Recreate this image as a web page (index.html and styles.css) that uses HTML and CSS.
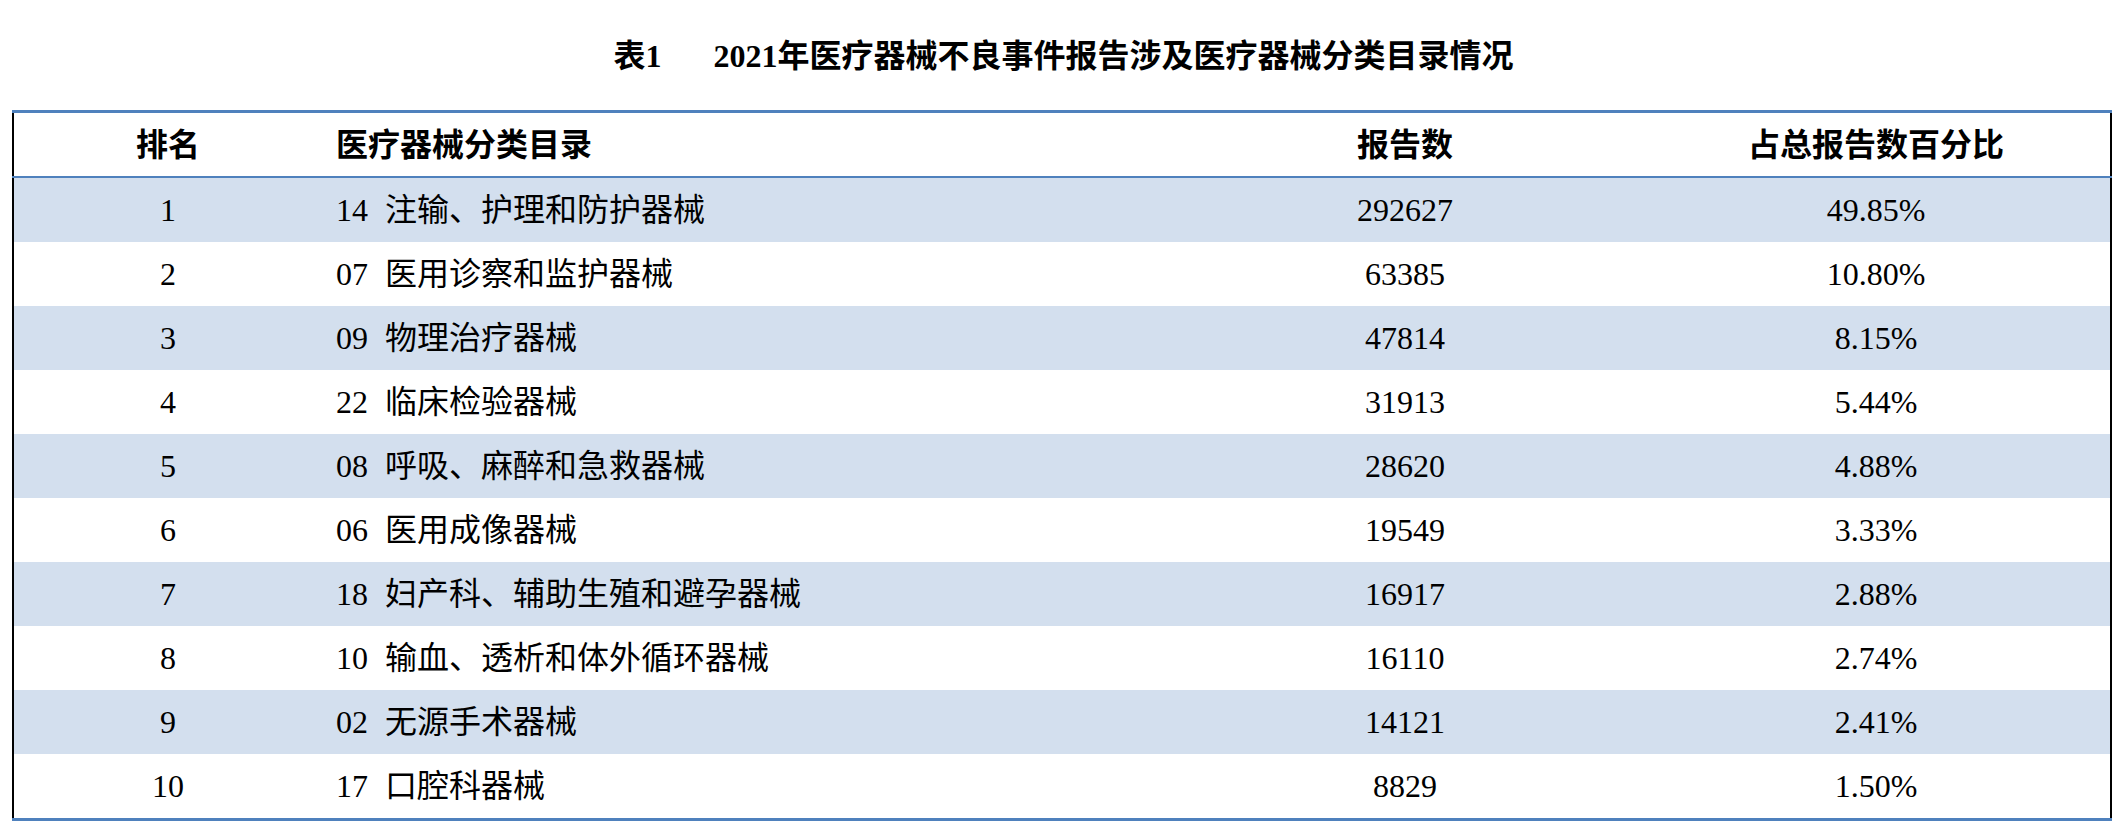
FILE: index.html
```html
<!DOCTYPE html>
<html lang="zh-CN">
<head>
<meta charset="utf-8">
<title>表1 2021年医疗器械不良事件报告涉及医疗器械分类目录情况</title>
<link rel="stylesheet" href="styles.css">
</head>
<body>
<h1 class="title"><span class="title-no">表1</span><span>2021年医疗器械不良事件报告涉及医疗器械分类目录情况</span></h1>
<div class="table">
  <div class="row head">
    <div class="c c-rank">排名</div>
    <div class="c c-cat">医疗器械分类目录</div>
    <div class="c c-num">报告数</div>
    <div class="c c-pct">占总报告数百分比</div>
  </div>
  <div class="rule"></div>
  <div class="row shade">
    <div class="c c-rank">1</div>
    <div class="c c-cat">14 注输、护理和防护器械</div>
    <div class="c c-num">292627</div>
    <div class="c c-pct">49.85%</div>
  </div>
  <div class="row">
    <div class="c c-rank">2</div>
    <div class="c c-cat">07 医用诊察和监护器械</div>
    <div class="c c-num">63385</div>
    <div class="c c-pct">10.80%</div>
  </div>
  <div class="row shade">
    <div class="c c-rank">3</div>
    <div class="c c-cat">09 物理治疗器械</div>
    <div class="c c-num">47814</div>
    <div class="c c-pct">8.15%</div>
  </div>
  <div class="row">
    <div class="c c-rank">4</div>
    <div class="c c-cat">22 临床检验器械</div>
    <div class="c c-num">31913</div>
    <div class="c c-pct">5.44%</div>
  </div>
  <div class="row shade">
    <div class="c c-rank">5</div>
    <div class="c c-cat">08 呼吸、麻醉和急救器械</div>
    <div class="c c-num">28620</div>
    <div class="c c-pct">4.88%</div>
  </div>
  <div class="row">
    <div class="c c-rank">6</div>
    <div class="c c-cat">06 医用成像器械</div>
    <div class="c c-num">19549</div>
    <div class="c c-pct">3.33%</div>
  </div>
  <div class="row shade">
    <div class="c c-rank">7</div>
    <div class="c c-cat">18 妇产科、辅助生殖和避孕器械</div>
    <div class="c c-num">16917</div>
    <div class="c c-pct">2.88%</div>
  </div>
  <div class="row">
    <div class="c c-rank">8</div>
    <div class="c c-cat">10 输血、透析和体外循环器械</div>
    <div class="c c-num">16110</div>
    <div class="c c-pct">2.74%</div>
  </div>
  <div class="row shade">
    <div class="c c-rank">9</div>
    <div class="c c-cat">02 无源手术器械</div>
    <div class="c c-num">14121</div>
    <div class="c c-pct">2.41%</div>
  </div>
  <div class="row">
    <div class="c c-rank">10</div>
    <div class="c c-cat">17 口腔科器械</div>
    <div class="c c-num">8829</div>
    <div class="c c-pct">1.50%</div>
  </div>
</div>
</body>
</html>
```
FILE: styles.css
```css
html, body {
  margin: 0;
  padding: 0;
  background: #ffffff;
}

body {
  font-family: "Liberation Serif", "Noto Sans CJK SC", serif;
  color: #000000;
  width: 2127px;
}

.title {
  margin: 36px 0 34px 0;
  height: 40px;
  line-height: 40px;
  font-size: 32px;
  font-weight: 700;
  text-align: center;
  display: flex;
  justify-content: center;
}

.title-no {
  margin-right: 52px;
}

.table {
  margin-left: 12px;
  width: 2100px;
  border-top: 3px solid #4f81bd;
  border-bottom: 3px solid #4f81bd;
}

.row {
  display: grid;
  grid-template-columns: 308px 846px 474px 468px;
  height: 64px;
  align-items: center;
  border-left: 2px solid #000000;
  border-right: 2px solid #000000;
  font-size: 32px;
  line-height: 40px;
}

.row.head {
  height: 63px;
  font-weight: 700;
}

.rule {
  height: 2px;
  background: #4f81bd;
}

.row.shade {
  background: #d3dfee;
}

.c {
  white-space: nowrap;
}

.c-rank,
.c-num,
.c-pct {
  text-align: center;
}

.c-cat {
  padding-left: 14px;
  word-spacing: 9px;
}
```
